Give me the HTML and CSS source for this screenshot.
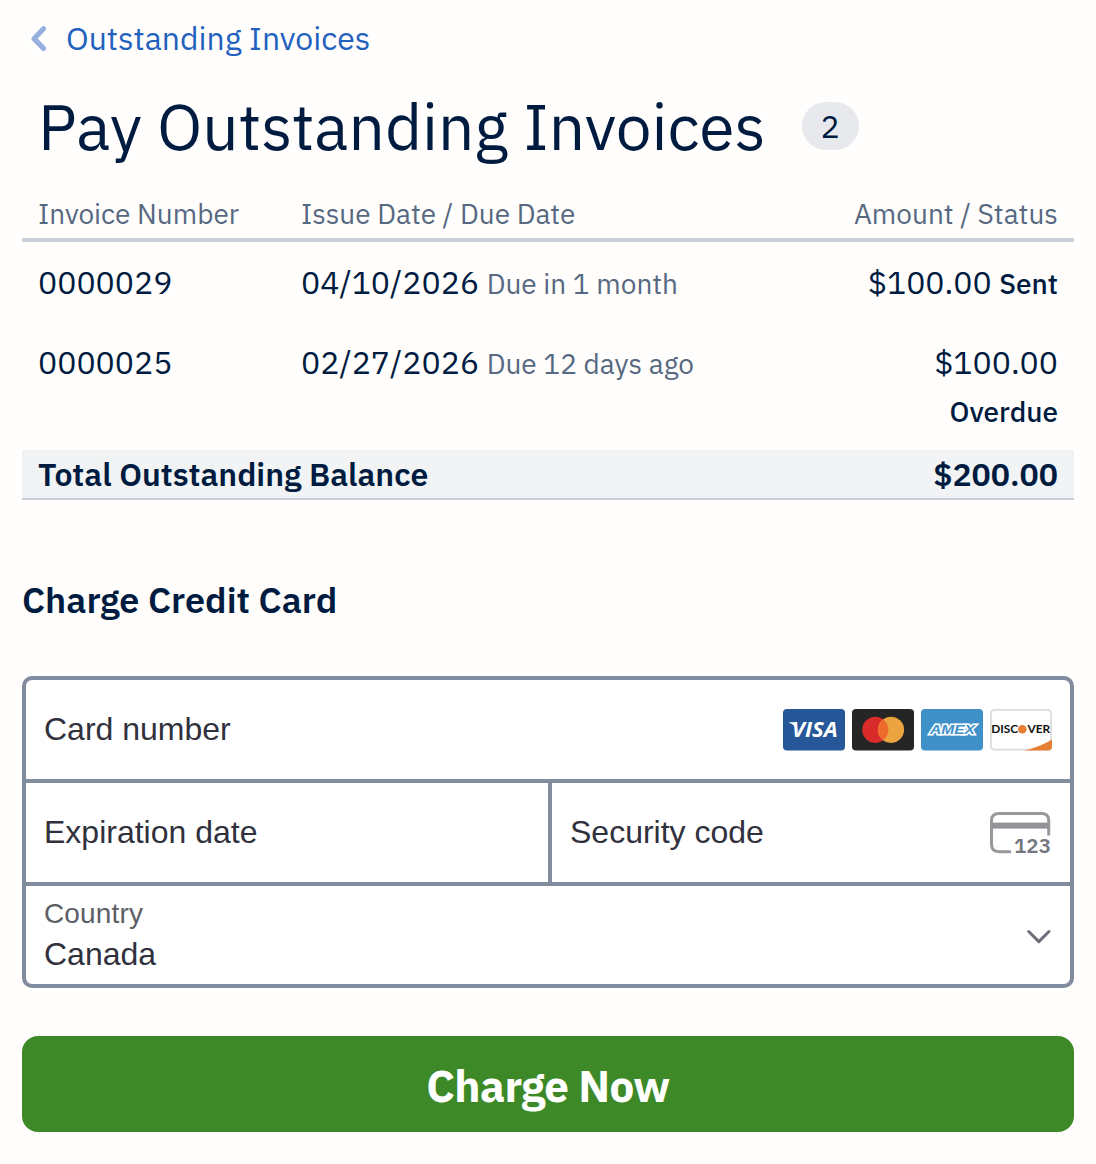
FILE: index.html
```html
<!DOCTYPE html>
<html lang="en">

<head>
  <meta charset="UTF-8">
  <meta name="viewport" content="width=device-width, initial-scale=1.0">
  <title>Pay Outstanding Invoices</title>
  <link rel="stylesheet" href="styles.css">
</head>

<body>
  <a class="back" href="#">
    <svg class="back-icon" width="18" height="28" viewBox="0 0 18 28">
      <path d="M13.5 4.7 L4 14.7 L13.5 24.3" fill="none" stroke="#95afdf" stroke-width="5.2" stroke-linecap="round" stroke-linejoin="round"/>
    </svg>
    <span>Outstanding Invoices</span>
  </a>

  <div class="title">
    <h1>Pay Outstanding Invoices</h1>
    <span class="badge">2</span>
  </div>

  <table class="invoices">
    <thead>
      <tr>
        <th class="col-number">Invoice Number</th>
        <th class="col-date">Issue Date / Due Date</th>
        <th class="col-amount">Amount / Status</th>
      </tr>
    </thead>
    <tbody>
      <tr>
        <td>0000029</td>
        <td>04/10/2026 <span class="due">Due in 1 month</span></td>
        <td class="right">$100.00 <span class="status">Sent</span></td>
      </tr>
      <tr>
        <td>0000025</td>
        <td>02/27/2026 <span class="due">Due 12 days ago</span></td>
        <td class="right">$100.00 <span class="status">Overdue</span></td>
      </tr>
    </tbody>
    <tfoot>
      <tr>
        <td colspan="2">Total Outstanding Balance</td>
        <td class="right">$200.00</td>
      </tr>
    </tfoot>
  </table>

  <h2>Charge Credit Card</h2>

  <div class="card-form">
    <div class="row">
      <div class="field">
        <span class="placeholder">Card number</span>
        <div class="brands">
          <!-- visa -->
          <svg width="62" height="42" viewBox="0 0 62 42">
            <rect width="62" height="41.5" rx="4" fill="#255799"/>
            <path d="M6 13.2 H12.5 L15 22 Q12 15.5 6 13.8 Z" fill="#fff"/>
            <text x="8.8" y="28.3" textLength="46" lengthAdjust="spacingAndGlyphs" class="visa">VISA</text>
          </svg>
          <!-- mastercard -->
          <svg width="62" height="42" viewBox="0 0 62 42">
            <rect width="62" height="41.5" rx="4" fill="#252525"/>
            <circle cx="23.3" cy="20.8" r="13.1" fill="#d92b2a"/>
            <circle cx="39" cy="20.8" r="13.1" fill="#eba440"/>
            <path d="M31.15 10.3 A13.1 13.1 0 0 1 31.15 31.3 A13.1 13.1 0 0 1 31.15 10.3 Z" fill="#ee6b2d"/>
          </svg>
          <!-- amex -->
          <svg width="62" height="42" viewBox="0 0 62 42">
            <rect width="62" height="41.5" rx="4" fill="#4091c9"/>
            <text x="9" y="25.4" textLength="45" lengthAdjust="spacingAndGlyphs" class="amex">AMEX</text>
          </svg>
          <!-- discover -->
          <svg width="62" height="42" viewBox="0 0 62 42">
            <rect x="0.9" y="0.9" width="60.2" height="39.7" rx="3.5" fill="#fff" stroke="#dcdcdc" stroke-width="1.8"/>
            <path d="M34 41.5 Q50 38 62 30.5 V37.5 Q62 41.5 58 41.5 Z" fill="#e67f35"/>
            <text x="1.2" y="24.3" textLength="27" lengthAdjust="spacingAndGlyphs" class="discover">DISC</text>
            <circle cx="32.3" cy="20.2" r="4.3" fill="#e67f35"/>
            <text x="37.4" y="24.3" textLength="22.8" lengthAdjust="spacingAndGlyphs" class="discover">VER</text>
          </svg>
        </div>
      </div>
    </div>
    <div class="row">
      <div class="field">
        <span class="placeholder">Expiration date</span>
      </div>
      <div class="field security">
        <span class="placeholder">Security code</span>
        <svg width="62" height="52" viewBox="0 -3 62 52">
          <path d="M58.7 25.5 V10.5 Q58.7 3.5 51.5 3.5 H9 Q1.5 3.5 1.5 10.5 V34 Q1.5 41.7 9 41.7 H21" fill="none" stroke="#97979c" stroke-width="3"/>
          <rect x="1" y="12.6" width="58" height="6" fill="#929297"/>
          <text x="24" y="43.3" textLength="37" lengthAdjust="spacingAndGlyphs" class="cvc">123</text>
        </svg>
      </div>
    </div>
    <div class="row">
      <div class="field country">
        <div class="select">
          <div class="label">Country</div>
          <div class="value">Canada</div>
        </div>
        <svg class="chevron" width="26" height="16" viewBox="0 0 26 16">
          <path d="M2.7 2.5 L12.8 12.6 L23 2.5" fill="none" stroke="#6d6e78" stroke-width="3" stroke-linecap="round" stroke-linejoin="round"/>
        </svg>
      </div>
    </div>
  </div>

  <button class="charge">Charge Now</button>
</body>

</html>
```

FILE: styles.css
```css
* {
  box-sizing: border-box;
}

body {
  margin: 0;
  padding: 14px 22px 0;
  font-family: 'IBM Plex Sans', 'Open Sans', sans-serif;
  font-size: 32px;
  line-height: 48px;
  color: #001b40;
  background-color: #fffefd;
}

.back {
  display: flex;
  align-items: center;
  height: 48px;
  padding-left: 8px;
  color: #2361be;
  text-decoration: none;
}

.back-icon {
  margin-right: 18px;
}

.title {
  display: flex;
  align-items: center;
  height: 80px;
  margin-top: 24px;
  padding-left: 16px;
}

h1 {
  margin: 0;
  font-size: 64px;
  font-weight: 400;
  line-height: 80px;
}

.badge {
  width: 57px;
  height: 48px;
  margin: 0 0 1px 36px;
  border-radius: 24px;
  text-align: center;
  background-color: #e7e9ed;
}

.invoices {
  width: 100%;
  margin-top: 24px;
  table-layout: fixed;
  border-collapse: separate;
  border-spacing: 0;
}

.invoices th {
  padding: 0 16px;
  border-bottom: 4px solid #ccd0da;
  font-size: 28px;
  font-weight: 400;
  text-align: left;
  color: #576981;
}

.col-number {
  width: 25%;
}

.col-date {
  width: 50%;
}

.invoices td {
  padding: 16px;
  vertical-align: top;
}

.invoices .col-amount,
.invoices .right {
  text-align: right;
}

.due,
.status {
  font-size: 28px;
  line-height: 1;
}

.due {
  color: #576981;
}

.status {
  font-weight: 500;
}

.invoices tfoot td {
  padding: 0 16px;
  border-bottom: 2px solid #c9cfd8;
  font-weight: 600;
  background-color: #f1f3f5;
}

h2 {
  margin: 73px 0 49px;
  font-size: 36px;
  font-weight: 600;
  line-height: 54px;
}

.card-form {
  height: 312px;
  border: 4px solid #828c9f;
  border-radius: 10px;
  font-family: 'Liberation Sans', Arial, sans-serif;
  font-size: 32px;
  color: #30313d;
  background-color: #fff;
}

.row {
  display: flex;
  height: 103px;
  border-bottom: 4px solid #828c9f;
}

.row:last-child {
  height: 98px;
  border-bottom: none;
}

.field {
  display: flex;
  flex: 1 1 50%;
  align-items: center;
  justify-content: space-between;
  padding: 0 18px;
}

.placeholder {
  padding-bottom: 2px;
}

.security {
  border-left: 4px solid #828c9f;
}

.brands {
  display: flex;
  gap: 7px;
}

.visa {
  font: italic 700 22px 'Open Sans', sans-serif;
  fill: #fff;
}

.amex {
  font: italic 700 12.5px 'Liberation Sans', sans-serif;
  fill: #4091c9;
  stroke: #fff;
  stroke-width: 2.8px;
  paint-order: stroke;
}

.discover {
  font: 700 12px Lato, sans-serif;
  fill: #111;
}

.cvc {
  font: 600 21px 'IBM Plex Sans', 'Liberation Sans', sans-serif;
  fill: #75767f;
}

.country {
  line-height: 40px;
}

.select {
  padding-bottom: 2px;
}

.label {
  font-size: 28px;
  letter-spacing: 0.15px;
  color: #5d5e66;
}

.chevron {
  margin-top: 3px;
}

.charge {
  display: block;
  width: 100%;
  height: 96px;
  margin-top: 48px;
  padding: 2px 0 0;
  border: none;
  border-radius: 16px;
  font-family: 'IBM Plex Sans', 'Open Sans', sans-serif;
  font-size: 44px;
  font-weight: 700;
  letter-spacing: -0.6px;
  color: #fff;
  background-color: #3d8927;
}
```
